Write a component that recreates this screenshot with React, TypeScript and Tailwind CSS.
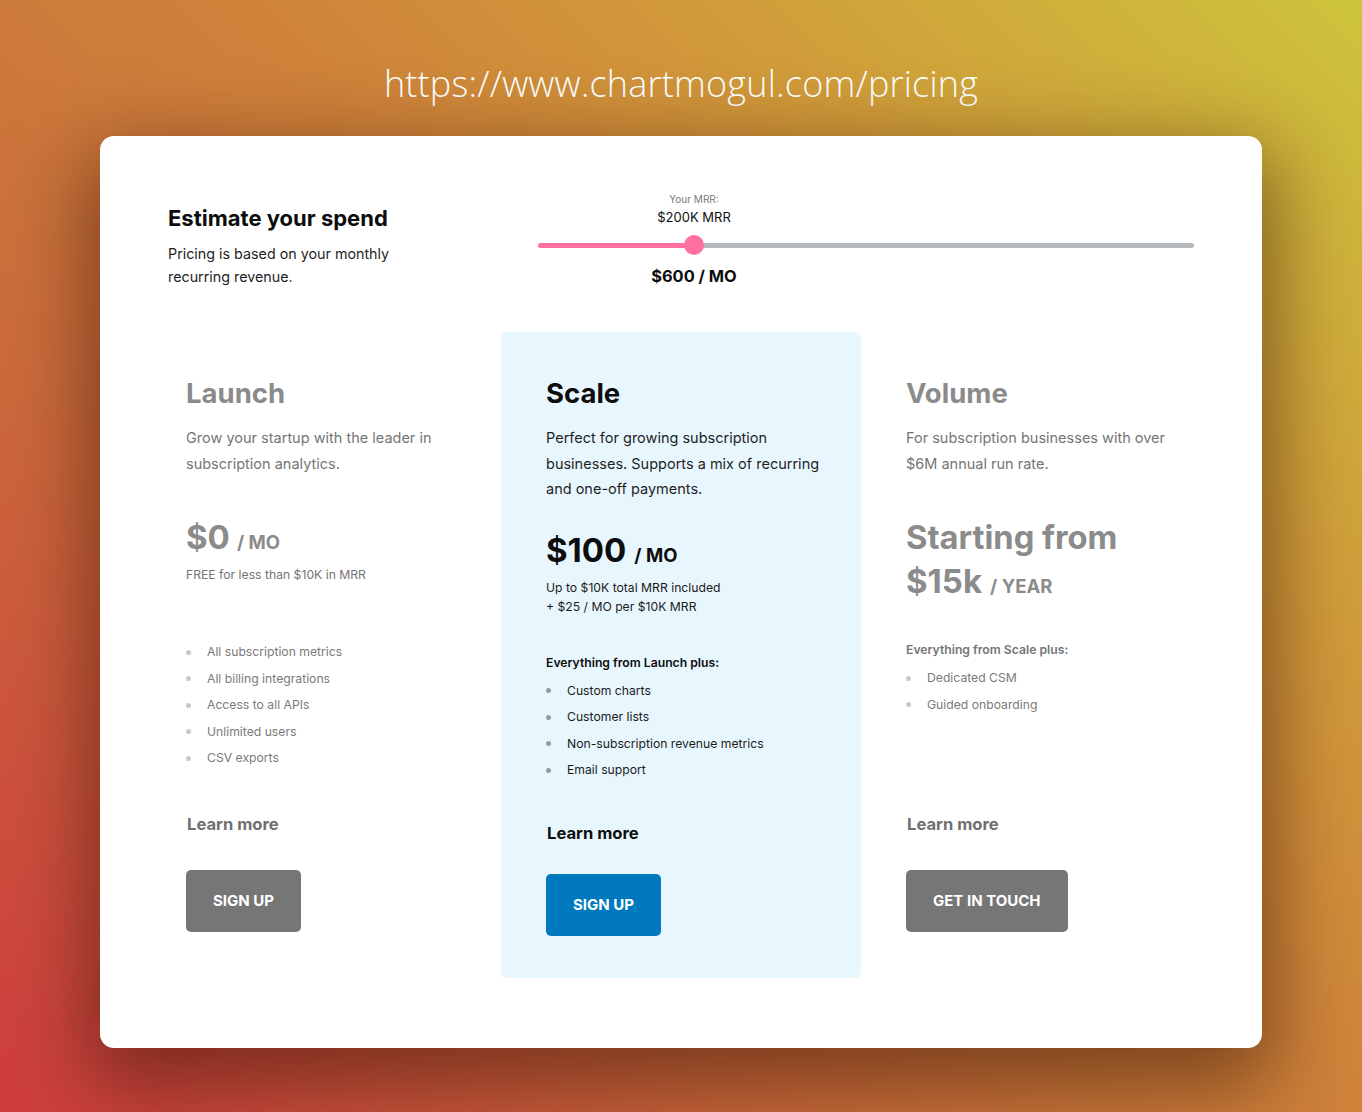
import React from 'react';

type Plan = {
  name: string;
  desc: string;
  descWidth: string;
  featured?: boolean;
};

const launchFeatures = [
  'All subscription metrics',
  'All billing integrations',
  'Access to all APIs',
  'Unlimited users',
  'CSV exports',
];

const scaleFeatures = [
  'Custom charts',
  'Customer lists',
  'Non-subscription revenue metrics',
  'Email support',
];

const volumeFeatures = ['Dedicated CSM', 'Guided onboarding'];

function FeatureList({ items, featured }: { items: string[]; featured?: boolean }) {
  return (
    <ul className="flex flex-col">
      {items.map((item) => (
        <li key={item} className={`flex items-center gap-[16px] text-[12.2px] leading-[26.5px] ${featured ? 'text-[#1a1a1a]' : 'text-[#7a7a7a]'}`}>
          <span className={`h-[5px] w-[5px] shrink-0 rounded-full ${featured ? 'bg-[#9a9a9a]' : 'bg-[#c9c9c9]'}`}></span>
          {item}
        </li>
      ))}
    </ul>
  );
}

function PlanHeader({ plan }: { plan: Plan }) {
  return (
    <>
      <h2 className={`text-[27.5px] font-bold leading-[34px] ${plan.featured ? 'text-[#0d0d0d]' : 'text-[#8b8b8b]'}`}>{plan.name}</h2>
      <p className={`mt-[15px] text-[14.5px] leading-[25.5px] ${plan.descWidth} ${plan.featured ? 'text-[#1f1f1f]' : 'text-[#757575]'}`}>
        {plan.desc}
      </p>
    </>
  );
}

export default function App() {
  return (
    <div
      className="min-h-screen flex flex-col items-center bg-[linear-gradient(45deg,#cf3c3e_0%,#cc6a3c_30%,#cd7b3b_45%,#cf833a_55%,#d1993a_72%,#cfb13b_88%,#cdc43c_100%)] pt-[64px] pb-[64px]"
      style={{ fontFamily: 'Inter, "Noto Sans", sans-serif' }}
    >
      <div className="text-[36px] leading-[40px] font-light text-white tracking-[0.2px]" style={{ fontFamily: '"Open Sans", Lato, sans-serif' }}>
        https://www.chartmogul.com/pricing
      </div>

      <div className="mt-[32px] w-[1162px] rounded-[14px] bg-white shadow-[0_28px_80px_12px_rgba(45,12,0,0.5)] pt-[56px] pb-[70px]">
        {/* estimate header */}
        <div className="flex h-[97px] items-start px-[68px]">
          <div className="mt-[12px] w-[250px]">
            <h1 className="text-[22px] font-bold leading-[28px] text-[#0d0d0d]">Estimate your spend</h1>
            <p className="mt-[10px] text-[14.3px] leading-[23px] text-[#1f1f1f]">
              Pricing is based on your monthly recurring revenue.
            </p>
          </div>
          <div className="ml-auto w-[656px]">
            <div className="flex w-[312px] flex-col items-center">
              <span className="text-[10px] leading-[14px] text-[#7a7a7a]">Your MRR:</span>
              <span className="mt-[2px] text-[13px] leading-[18px] text-[#111]">$200K MRR</span>
            </div>
            <div className="mt-[9px] flex h-[20px] items-center">
              <div className="h-[5px] w-[156px] rounded-l-full bg-[#ff70a0]"></div>
              <div className="relative z-10 -mx-[10px] h-[20px] w-[20px] rounded-full bg-[#ff70a0]"></div>
              <div className="h-[5px] flex-1 rounded-r-full bg-[#b5babc]"></div>
            </div>
            <div className="mt-[10px] flex w-[312px] justify-center">
              <span className="text-[16.4px] font-bold leading-[22px] text-[#0d0d0d]">$600 / MO</span>
            </div>
          </div>
        </div>

        {/* plans */}
        <div className="mx-auto mt-[43px] grid w-[1080px] grid-cols-3">
          {/* Launch */}
          <div className="flex flex-col pl-[45px] pr-[30px] pt-[44px] pb-[46px]">
            <PlanHeader plan={{ name: 'Launch', desc: 'Grow your startup with the leader in subscription analytics.', descWidth: 'w-[270px]' }} />
            <div className="mt-[39px] flex h-[44px] items-baseline leading-[44px] text-[#8b8b8b]">
              <span className="text-[33px] font-bold">$0</span>
              <span className="ml-[7px] text-[18.5px] font-bold">/ MO</span>
            </div>
            <p className="mt-[6px] text-[12.2px] leading-[19px] text-[#757575]">FREE for less than $10K in MRR</p>
            <div className="mt-[55px]">
              <FeatureList items={launchFeatures} />
            </div>
            <div className="mt-auto flex flex-col items-start">
              <a className="text-[16.6px] font-bold leading-[24px] text-[#6f6f6f] pl-[1px]">Learn more</a>
              <button className="mt-[34px] h-[62px] rounded-[5px] bg-[#767676] px-[27px] text-[15px] font-bold text-white">
                SIGN UP
              </button>
            </div>
          </div>

          {/* Scale */}
          <div className="flex flex-col rounded-[6px] bg-[#e8f7fe] pl-[45px] pr-[30px] pt-[44px] pb-[42px]">
            <PlanHeader plan={{ name: 'Scale', desc: 'Perfect for growing subscription businesses. Supports a mix of recurring and one-off payments.', descWidth: 'w-[280px]', featured: true }} />
            <div className="mt-[26px] flex h-[44px] items-baseline leading-[44px] text-[#0d0d0d]">
              <span className="text-[33px] font-bold">$100</span>
              <span className="ml-[8px] text-[18.5px] font-bold">/ MO</span>
            </div>
            <p className="mt-[6px] text-[12.2px] leading-[19px] text-[#1a1a1a]">
              Up to $10K total MRR included
              <br />+ $25 / MO per $10K MRR
            </p>
            <h3 className="mt-[37px] text-[12.2px] font-semibold leading-[19px] text-[#0d0d0d]">Everything from Launch plus:</h3>
            <div className="mt-[6px]">
              <FeatureList items={scaleFeatures} featured />
            </div>
            <div className="mt-[37px] flex flex-col items-start">
              <a className="text-[16.6px] font-bold leading-[24px] text-[#0d0d0d] pl-[1px]">Learn more</a>
              <button className="mt-[29.5px] h-[62px] rounded-[5px] bg-[#0079be] px-[27px] text-[15px] font-bold text-white">
                SIGN UP
              </button>
            </div>
          </div>

          {/* Volume */}
          <div className="flex flex-col pl-[45px] pr-[30px] pt-[44px] pb-[46px]">
            <PlanHeader plan={{ name: 'Volume', desc: 'For subscription businesses with over $6M annual run rate.', descWidth: 'w-[270px]' }} />
            <div className="mt-[39px] leading-[44px] text-[#8b8b8b]">
              <div className="text-[32.7px] font-bold">Starting from</div>
              <div className="flex h-[44px] items-baseline">
                <span className="text-[33px] font-bold">$15k</span>
                <span className="ml-[8px] text-[18.5px] font-bold">/ YEAR</span>
              </div>
            </div>
            <h3 className="mt-[37px] text-[12.2px] font-semibold leading-[19px] text-[#757575]">Everything from Scale plus:</h3>
            <div className="mt-[6px]">
              <FeatureList items={volumeFeatures} />
            </div>
            <div className="mt-auto flex flex-col items-start">
              <a className="text-[16.6px] font-bold leading-[24px] text-[#6f6f6f] pl-[1px]">Learn more</a>
              <button className="mt-[34px] h-[62px] rounded-[5px] bg-[#767676] px-[27px] text-[15px] font-bold text-white">
                GET IN TOUCH
              </button>
            </div>
          </div>
        </div>
      </div>
    </div>
  );
}
